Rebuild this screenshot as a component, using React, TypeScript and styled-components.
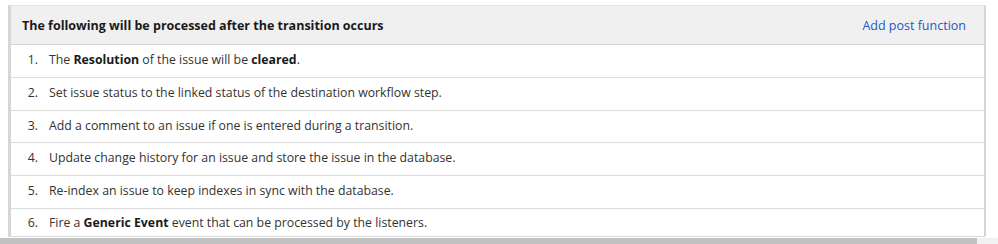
import React from 'react'
import styled, { createGlobalStyle } from 'styled-components'

const GlobalStyle = createGlobalStyle`
  html, body {
    margin: 0;
    padding: 0;
    background: #ffffff;
    font-family: "Open Sans", "Noto Sans", "Liberation Sans", sans-serif;
    color: #333333;
  }
`

const Page = styled.div`
  height: 244px;
  display: flex;
  flex-direction: column;
  overflow: hidden;
`

const Frame = styled.div`
  height: 238px;
  box-sizing: border-box;
  padding: 5px 12px 0 8px;
  background: #ffffff;
  overflow: hidden;
`

const Table = styled.div`
  background: #ffffff;
  border-left: 3px solid #d6d6d6;
  border-top: 1px solid #e2e2e2;
  border-right: 2px solid #d4d4d4;
  border-bottom: 1px solid #d9d9d9;
  border-bottom-right-radius: 2px;
`

const Header = styled.div`
  display: flex;
  align-items: center;
  justify-content: space-between;
  height: 38px;
  padding: 0 18px 0 11px;
  background: #f0f0f0;
  border-bottom: 1px solid #d4d4d4;
`

const Title = styled.span`
  font-size: 12.5px;
  font-weight: 700;
  color: #1a1a1a;
`

const HeaderLink = styled.a`
  font-size: 12.5px;
  color: #2059c8;
  text-decoration: none;
  cursor: pointer;
`

const List = styled.ol`
  margin: 0;
  padding: 0;
  list-style: none;
`

const Row = styled.li<{ $last?: boolean }>`
  display: flex;
  align-items: flex-start;
  box-sizing: border-box;
  height: ${(p) => (p.$last ? '27px' : '32.8px')};
  padding-top: ${(p) => (p.$last ? '5px' : '6px')};
  font-size: 12.3px;
  line-height: 18px;
  color: #333333;
  border-bottom: ${(p) => (p.$last ? 'none' : '1px solid #dcdcdc')};
`

const Num = styled.span`
  width: 27px;
  text-align: right;
  margin-right: 11px;
  flex-shrink: 0;
`

const Strong = styled.b`
  font-weight: 700;
  color: #1a1a1a;
`

const Scrollbar = styled.div`
  height: 6px;
  display: flex;
  background: #f1f1f1;
`

const Thumb = styled.div`
  width: 977px;
  background: #c1c1c1;
`

const steps: React.ReactNode[] = [
  <>
    The <Strong>Resolution</Strong> of the issue will be <Strong>cleared</Strong>.
  </>,
  <>Set issue status to the linked status of the destination workflow step.</>,
  <>Add a comment to an issue if one is entered during a transition.</>,
  <>Update change history for an issue and store the issue in the database.</>,
  <>Re-index an issue to keep indexes in sync with the database.</>,
  <>
    Fire a <Strong>Generic Event</Strong> event that can be processed by the listeners.
  </>,
]

const App: React.FC = () => {
  return (
    <Page>
      <GlobalStyle />
      <Frame>
        <Table>
          <Header>
            <Title>The following will be processed after the transition occurs</Title>
            <HeaderLink>Add post function</HeaderLink>
          </Header>
          <List>
            {steps.map((step, i) => (
              <Row key={i} $last={i === steps.length - 1}>
                <Num>{i + 1}.</Num>
                <span>{step}</span>
              </Row>
            ))}
          </List>
        </Table>
      </Frame>
      <Scrollbar>
        <Thumb />
      </Scrollbar>
    </Page>
  )
}

export default App
